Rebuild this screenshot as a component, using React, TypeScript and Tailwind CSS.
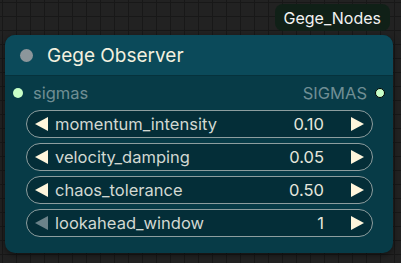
import React from 'react';

type Widget = { name: string; value: string; leftDisabled?: boolean };

const widgets: Widget[] = [
  { name: 'momentum_intensity', value: '0.10' },
  { name: 'velocity_damping', value: '0.05' },
  { name: 'chaos_tolerance', value: '0.50' },
  { name: 'lookahead_window', value: '1', leftDisabled: true },
];

const Arrow: React.FC<{ dir: 'left' | 'right'; muted?: boolean }> = ({ dir, muted }) => (
  <svg width="13" height="14" viewBox="0 0 13 14" className="shrink-0">
    <polygon
      points={dir === 'left' ? '13,0 13,14 0,7' : '0,0 0,14 13,7'}
      fill={muted ? '#6b8289' : '#fff6dc'}
    />
  </svg>
);

const App: React.FC = () => {
  return (
    <div
      className="w-[401px] h-[263px] overflow-hidden bg-[#222222] bg-[linear-gradient(#181818_1px,transparent_1px),linear-gradient(90deg,#181818_1px,transparent_1px)] bg-[size:14px_14px] bg-[position:2px_2px] pt-[4px] pl-[5px]"
      style={{ fontFamily: 'Inter, "Noto Sans", sans-serif' }}
    >
      <div className="flex justify-end w-[385px] h-[27px] mb-[4px]">
        <div className="h-[27px] px-[9px] rounded-[8px] bg-[#102017] text-[#f2f2f2] text-[16px] flex items-center">
          Gege_Nodes
        </div>
      </div>

      <div className="w-[388px] h-[218px] rounded-[10px] bg-[#073b47] overflow-hidden shadow-[0_2px_6px_rgba(0,0,0,0.5)]">
        <div className="h-[41px] bg-[#0b4a5a] border-b border-[#06323c] flex items-center pl-[15px]">
          <div className="w-[13px] h-[13px] rounded-full bg-[#8c969b]" />
          <span className="ml-[14px] mt-[1px] text-[19px] text-[#f3f0df] leading-none">Gege Observer</span>
        </div>

        <div className="h-[34px] flex items-center justify-between pl-[8px] pr-[8px]">
          <div className="flex items-center">
            <div className="w-[10px] h-[10px] rounded-full bg-[#c8ffc8]" />
            <span className="ml-[10px] text-[16.5px] text-[#6f8e94]">sigmas</span>
          </div>
          <div className="flex items-center">
            <span className="mr-[8px] text-[16.5px] text-[#6f8e94]">SIGMAS</span>
            <div className="w-[10px] h-[10px] rounded-full bg-[#c8ffc8] border border-black" />
          </div>
        </div>

        <div className="flex flex-col gap-[5px] pl-[21px] pr-[20px]">
          {widgets.map((w) => (
            <div
              key={w.name}
              className="h-[28px] rounded-full border border-[#8d9e9f] bg-[#042e38] flex items-center pl-[8px] pr-[8px]"
            >
              <Arrow dir="left" muted={w.leftDisabled} />
              <span className="ml-[7px] text-[16.5px] text-[#d2d8d2] flex-1">{w.name}</span>
              <span className="text-[16.5px] text-[#e4e6dc] mr-[27px]">{w.value}</span>
              <Arrow dir="right" />
            </div>
          ))}
        </div>
      </div>
    </div>
  );
};

export default App;
